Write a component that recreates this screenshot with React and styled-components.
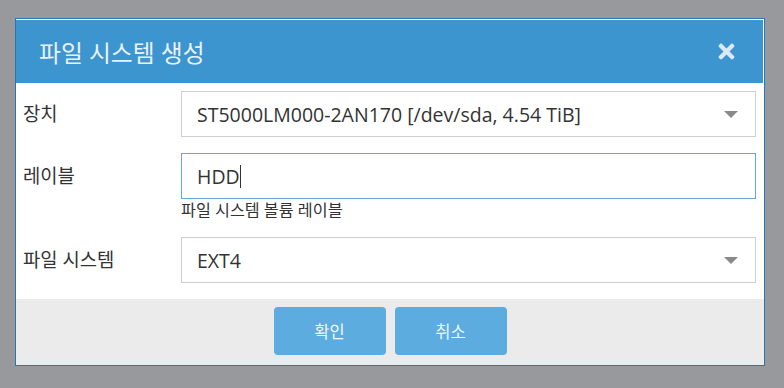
import React from 'react';
import styled, { createGlobalStyle } from 'styled-components';
import { FaTimes } from 'react-icons/fa';

const GlobalStyle = createGlobalStyle`
    html, body {
        margin: 0;
        padding: 0;
        background: #98999d;
        font-family: "Open Sans", "Noto Sans CJK KR", sans-serif;
    }
`;

const Dialog = styled.div`
    box-sizing: border-box;
    width: 750px;
    margin: 18px 0 0 15px;
    border: 1px solid #2777b5;
    background: #fff;
`;

const Header = styled.div`
    height: 64px;
    display: flex;
    align-items: center;
    justify-content: space-between;
    padding: 0 26px 0 23px;
    background: #3c95cf;
    box-shadow: inset 0 1px 0 #fff, inset -1px 0 0 #fff;
`;

const Title = styled.h1`
    margin: 0;
    font-size: 23.8px;
    font-weight: 400;
    color: #e8f1f8;
`;

const Close = styled.button`
    border: 0;
    background: none;
    padding: 0;
    display: flex;
    color: #dbe9f5;
    font-size: 23px;
    cursor: pointer;
`;

const Body = styled.div`
    padding: 8px 8px 16px 7px;
    display: flex;
    flex-direction: column;
    gap: 16px;
`;

const Row = styled.div`
    display: grid;
    grid-template-columns: 158px 1fr;
    align-items: start;
`;

const Label = styled.label`
    font-size: 18.8px;
    color: #333;
    line-height: 46px;
`;

const Field = styled.div`
    display: flex;
    flex-direction: column;
`;

const Box = styled.div`
    box-sizing: border-box;
    height: 46px;
    display: flex;
    align-items: center;
    justify-content: space-between;
    padding: 0 17px 0 15px;
    border: 1px solid ${props => props.focused ? '#66a6d6' : '#cfcfcf'};
    font-size: 19.5px;
    color: #333;
`;

const Caret = styled.span`
    width: 0;
    height: 0;
    border-left: 7px solid transparent;
    border-right: 7px solid transparent;
    border-top: 7px solid #8a8a8a;
`;

const Cursor = styled.span`
    display: inline-block;
    width: 1px;
    height: 23px;
    background: #333;
    vertical-align: middle;
    margin-top: -3px;
`;

const Help = styled.div`
    height: 22px;
    line-height: 22px;
    font-size: 16.2px;
    color: #333;
`;

const Footer = styled.div`
    height: 66px;
    background: #ebebeb;
    display: flex;
    justify-content: center;
    align-items: center;
    gap: 9px;
`;

const Button = styled.button`
    width: 112px;
    height: 48px;
    border: 0;
    border-radius: 4px;
    background: #5dacdf;
    color: #f2f7fb;
    font-family: inherit;
    font-size: 16.5px;
    margin-top: -2px;
`;

const App = () => {
    return <>
        <GlobalStyle />
        <Dialog>
            <Header>
                <Title>파일 시스템 생성</Title>
                <Close><FaTimes /></Close>
            </Header>
            <Body>
                <Row>
                    <Label>장치</Label>
                    <Box>ST5000LM000-2AN170 [/dev/sda, 4.54 TiB]<Caret /></Box>
                </Row>
                <Row>
                    <Label>레이블</Label>
                    <Field>
                        <Box focused><span>HDD<Cursor /></span></Box>
                        <Help>파일 시스템 볼륨 레이블</Help>
                    </Field>
                </Row>
                <Row>
                    <Label>파일 시스템</Label>
                    <Box>EXT4<Caret /></Box>
                </Row>
            </Body>
            <Footer>
                <Button>확인</Button>
                <Button>취소</Button>
            </Footer>
        </Dialog>
    </>
};

export default App;
